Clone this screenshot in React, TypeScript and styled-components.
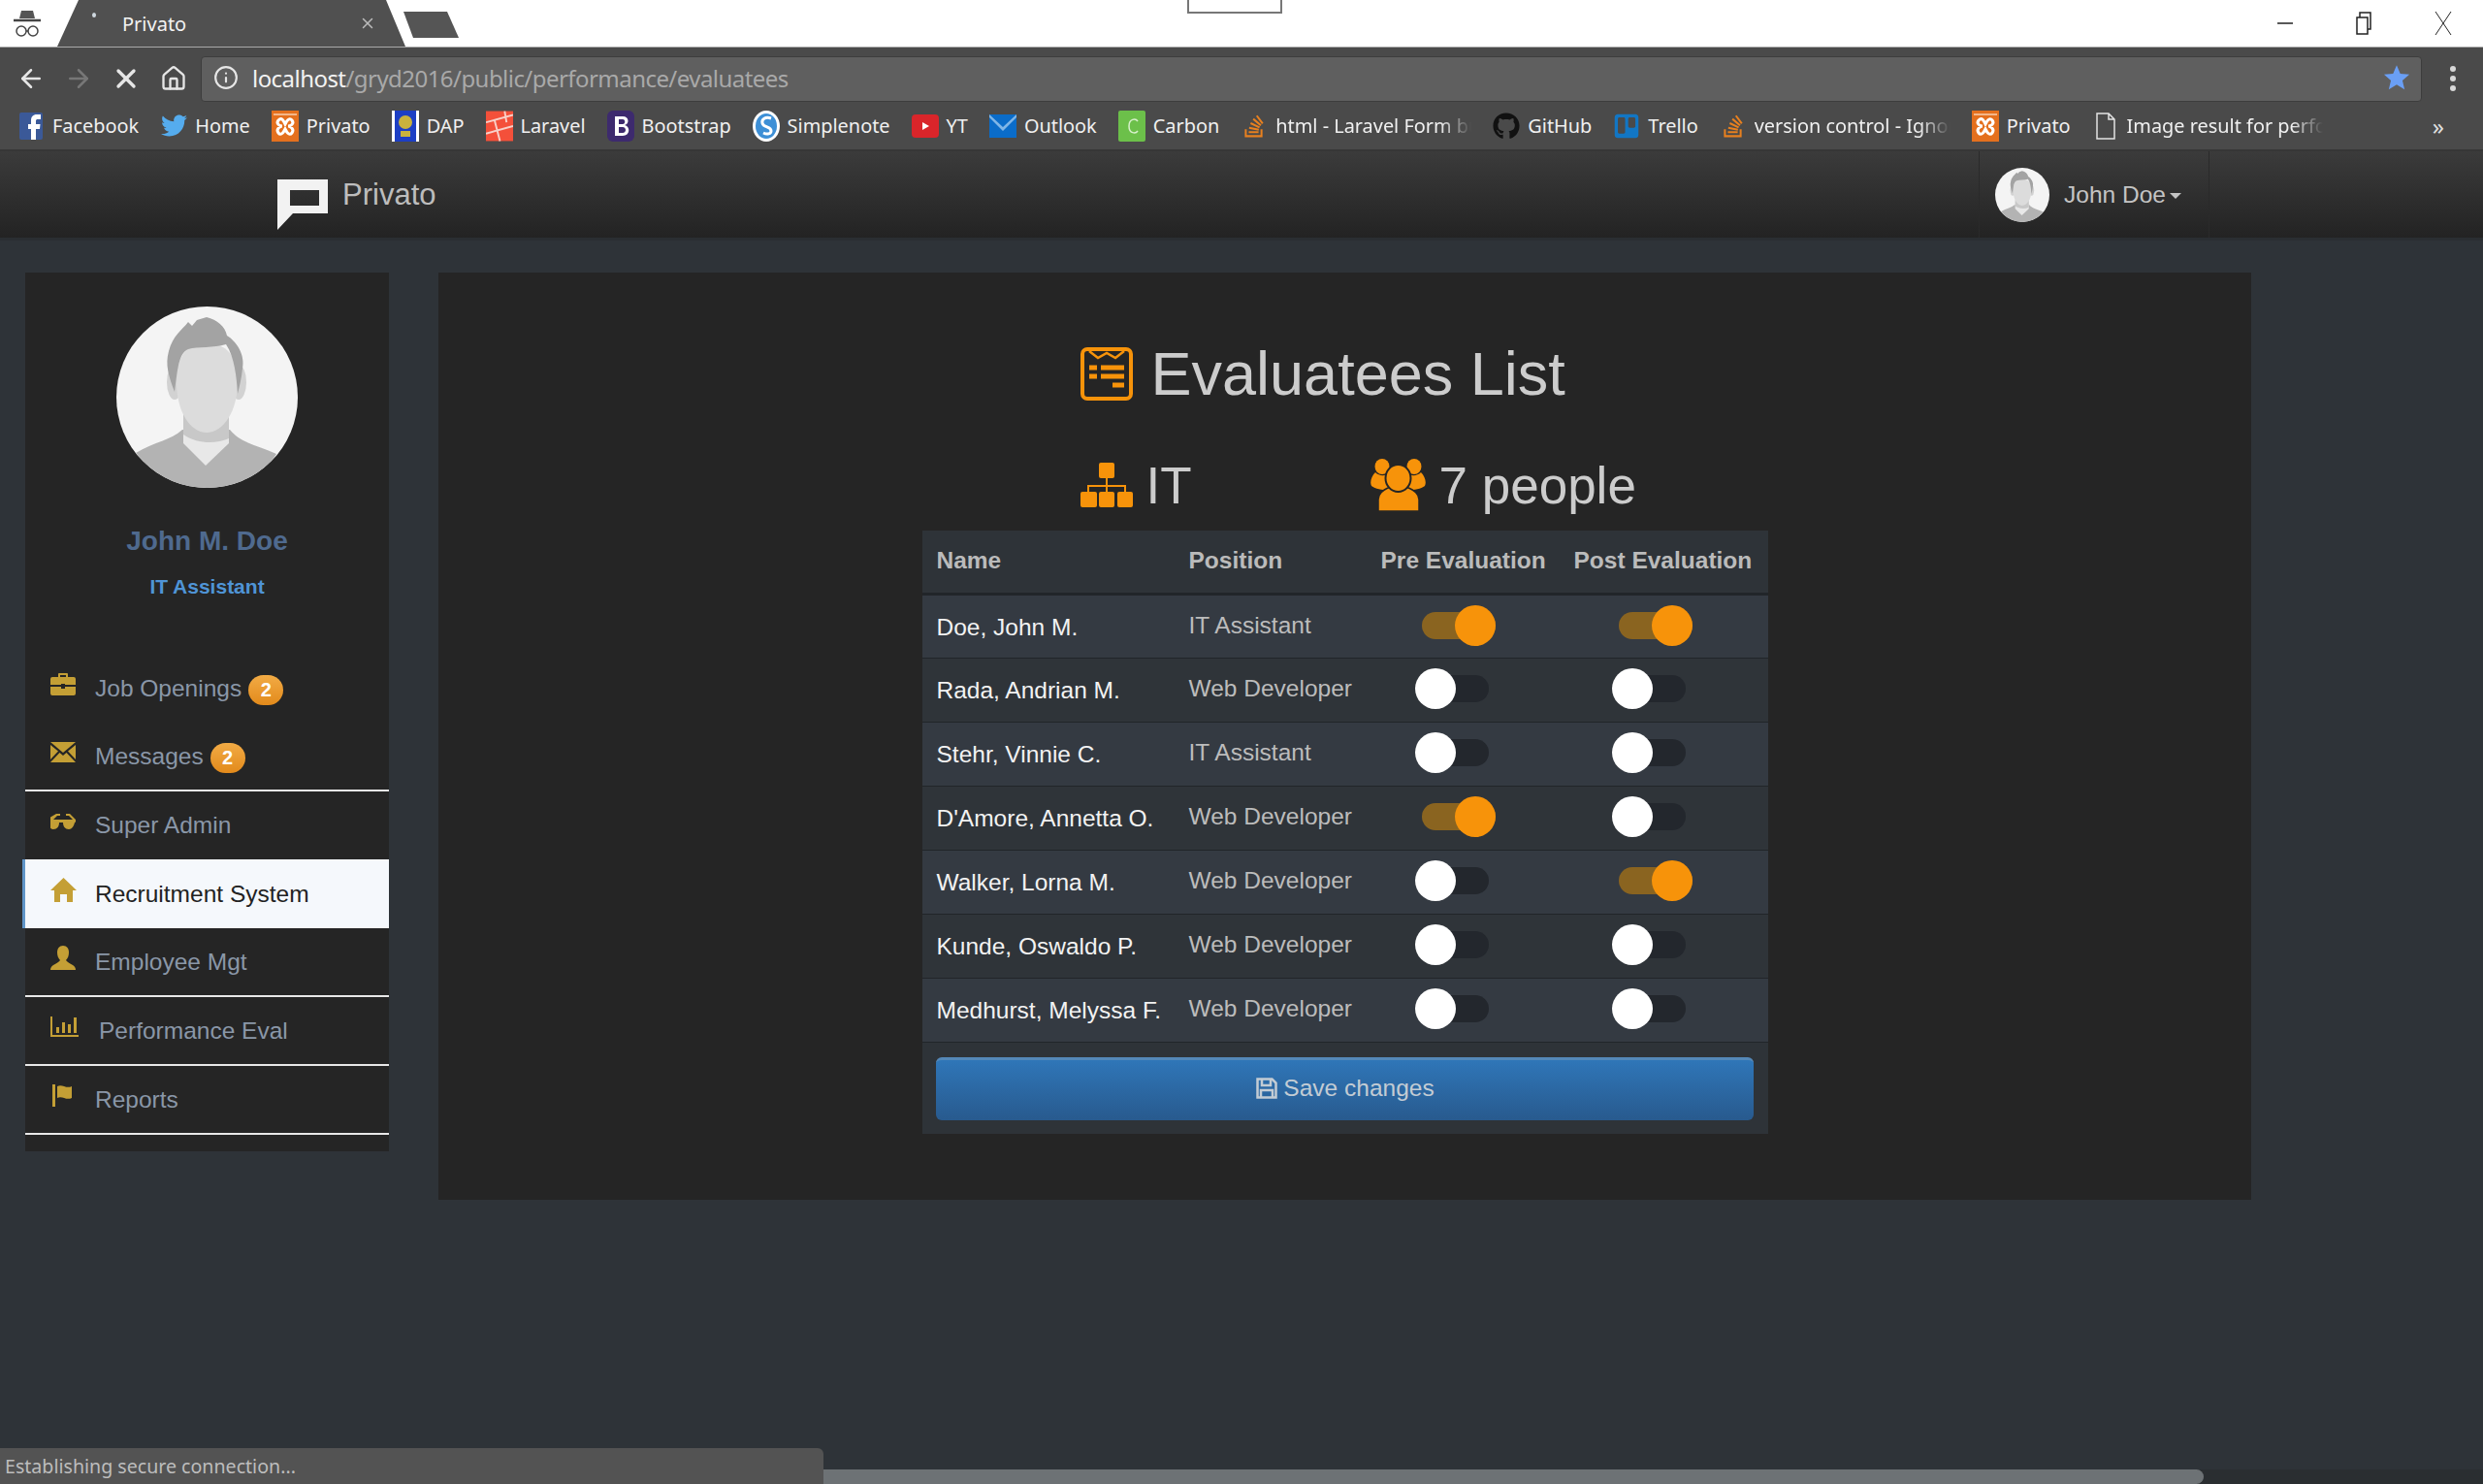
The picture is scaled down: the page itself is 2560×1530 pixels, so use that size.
import { ReactNode } from "react";
import styled, { createGlobalStyle } from "styled-components";
import { ArrowLeft, ArrowRight, Home, Info, X } from "lucide-react";
import { FaGithub, FaStackOverflow, FaTrello, FaTwitter } from "react-icons/fa";

const ORANGE = "#f7930a";
const GOLD = "#c49f35";

const GlobalStyle = createGlobalStyle`
  html, body {
    margin: 0;
    padding: 0;
    background: #2e3338;
  }
  * {
    box-sizing: border-box;
  }
`;

const Page = styled.div`
  position: relative;
  display: flex;
  flex-direction: column;
  width: 2560px;
  height: 1530px;
  overflow: hidden;
  background: #2e3338;
  font-family: "Liberation Sans", Arial, sans-serif;
`;

/* browser chrome */
const TabStrip = styled.div`
  position: relative;
  display: flex;
  align-items: flex-end;
  height: 49px;
  background: #fff;
  border-bottom: 1px solid #a9a9a9;
  font-family: "Noto Sans", sans-serif;
`;

const Incognito = styled.div`
  display: flex;
  justify-content: center;
  align-items: center;
  width: 59px;
  height: 48px;
  padding-right: 4px;
`;

const Tab = styled.div`
  position: relative;
  display: flex;
  align-items: center;
  width: 359px;
  height: 48px;
  padding: 0 30px 0 67px;
  background: #505050;
  clip-path: polygon(22px 0, 339px 0, 359px 100%, 0 100%);
  color: #f2f2f2;
  font-size: 20px;
`;

const TabSpinner = styled.span`
  position: absolute;
  top: 13px;
  left: 36px;
  width: 4px;
  height: 5px;
  border-radius: 50%;
  background: #cfd8e0;
`;

const TabTitle = styled.span`
  flex: 1;
`;

const NewTab = styled.div`
  width: 57px;
  height: 27px;
  margin: 0 0 9px -2px;
  background: #555;
  clip-path: polygon(0 0, 45px 0, 100% 100%, 10px 100%);
`;

const Marker = styled.div`
  position: absolute;
  top: -2px;
  left: 1224px;
  width: 98px;
  height: 16px;
  border: 2px solid #777;
`;

const WindowButtons = styled.div`
  display: flex;
  align-items: center;
  margin-left: auto;
  height: 48px;
  padding-right: 32px;
  gap: 65px;
`;

const Toolbar = styled.div`
  display: flex;
  align-items: center;
  height: 56px;
  padding: 8px 14px 0 7px;
  background: #4a4a4a;
`;

const NavIcon = styled.div<{ $dim?: boolean }>`
  display: flex;
  justify-content: center;
  width: 50px;
  margin-right: -1px;
  color: ${(p) => (p.$dim ? "#777" : "#e6e6e6")};
`;

const Omnibox = styled.div`
  display: flex;
  align-items: center;
  flex: 1;
  height: 47px;
  margin-left: 4px;
  padding: 0 11px 2px 12px;
  background: #5f5f5f;
  border: 1px solid #3d3d3d;
  border-radius: 4px;
  color: #a9a9a9;
  font-family: "Noto Sans", sans-serif;
  font-size: 24px;
  letter-spacing: -0.55px;
`;

const Host = styled.span`
  margin-left: 14px;
  color: #f2f2f2;
`;

const Star = styled.svg`
  margin-left: auto;
`;

const MenuDots = styled.div`
  display: flex;
  flex-direction: column;
  align-items: center;
  gap: 4px;
  width: 40px;
  margin-left: 12px;
  margin-right: -3px;
`;

const MenuDot = styled.span`
  width: 6px;
  height: 6px;
  border-radius: 50%;
  background: #d8d8d8;
`;

const BookmarkBar = styled.div`
  display: flex;
  align-items: center;
  gap: 22px;
  height: 51px;
  padding: 0 0 0 18px;
  background: #4a4a4a;
  border-bottom: 2px solid #363636;
  color: #f0f0f0;
  font-family: "Noto Sans", sans-serif;
  font-size: 19.9px;
`;

const Bookmark = styled.div`
  display: flex;
  align-items: center;
  gap: 8px;
`;

const Favicon = styled.div`
  display: flex;
  justify-content: center;
  align-items: center;
  flex: none;
  width: 28px;
  height: 28px;
`;

const BookmarkLabel = styled.span<{ $cut?: boolean }>`
  white-space: nowrap;
  ${(p) =>
    p.$cut &&
    `
    width: 202px;
    overflow: hidden;
    -webkit-mask-image: linear-gradient(to right, #000 84%, transparent 100%);
    mask-image: linear-gradient(to right, #000 84%, transparent 100%);
  `}
`;

const More = styled.span`
  margin-left: auto;
  padding-right: 40px;
  color: #ddd;
  font-size: 24px;
`;

/* app navbar */
const NavBar = styled.div`
  display: flex;
  align-items: stretch;
  height: 92px;
  padding-left: 286px;
  padding-right: 282px;
  background: linear-gradient(to bottom, #3b3b3b, #232323);
  border-bottom: 3px solid #2a2e32;
`;

const Brand = styled.div`
  display: flex;
  align-items: center;
  gap: 15px;
  margin-right: auto;
  color: #bdbdbd;
  font-size: 31px;
`;

const BrandLogo = styled.svg`
  margin-top: 20px;
`;

const UserMenu = styled.div`
  display: flex;
  align-items: center;
  width: 238px;
  padding-left: 16px;
  gap: 15px;
  border-left: 1px solid #2a2a2a;
  border-right: 1px solid #2a2a2a;
  color: #c4c4c4;
  font-size: 24.5px;
`;

const Caret = styled.span`
  width: 0;
  height: 0;
  margin: 3px 0 0 -11px;
  border-left: 6px solid transparent;
  border-right: 6px solid transparent;
  border-top: 6px solid #c4c4c4;
`;

const RoundPhoto = styled.svg<{ $size: number }>`
  display: block;
  flex: none;
  width: ${(p) => p.$size}px;
  height: ${(p) => p.$size}px;
  border-radius: 50%;
`;

/* page body */
const Body = styled.div`
  display: flex;
  align-items: flex-start;
  flex: 1;
  gap: 51px;
  padding: 33px 0 0 26px;
`;

const Sidebar = styled.div`
  width: 375px;
  height: 906px;
  padding-top: 35px;
  background: #252525;
`;

const Profile = styled.div`
  display: flex;
  flex-direction: column;
  align-items: center;
  height: 358px;
`;

const ProfileName = styled.div`
  margin-top: 39px;
  color: #4f6a8f;
  font-size: 28px;
  font-weight: 700;
`;

const ProfileRole = styled.div`
  margin-top: 19px;
  color: #4f94d6;
  font-size: 21px;
  font-weight: 700;
`;

const NavList = styled.div`
  display: flex;
  flex-direction: column;
`;

const NavItem = styled.div<{ $active?: boolean; $line?: boolean }>`
  position: relative;
  display: flex;
  align-items: center;
  height: ${(p) => (p.$line ? 71 : 70.5)}px;
  padding: 1px 0 0 26px;
  background: ${(p) => (p.$active ? "#f5f8fc" : "transparent")};
  border-bottom: ${(p) => (p.$line ? "2px solid #e8e8e8" : "none")};
  color: ${(p) => (p.$active ? "#222" : "#8a97a8")};
  font-size: 24.5px;
  ${(p) => p.$active && `box-shadow: -3px 0 0 #5f95c8;`}
`;

const NavIconBox = styled.div<{ $wide?: boolean }>`
  display: flex;
  flex: none;
  width: ${(p) => (p.$wide ? 50 : 46)}px;
  margin-bottom: 8px;
  color: ${GOLD};
`;

const Badge = styled.span`
  display: flex;
  justify-content: center;
  align-items: center;
  width: 36px;
  height: 31px;
  margin-left: 7px;
  margin-top: 3px;
  border-radius: 16px;
  background: linear-gradient(to bottom, #f2ab45, #e28a1b);
  color: #fff;
  font-size: 20px;
  font-weight: 700;
`;

const Main = styled.div`
  display: flex;
  flex-direction: column;
  align-items: center;
  width: 1869px;
  height: 956px;
  padding-top: 66px;
  background: #252525;
`;

const Content = styled.div`
  width: 872px;
`;

const Title = styled.div`
  display: flex;
  align-items: center;
  gap: 19px;
  height: 76px;
  padding-left: 163px;
  color: #cccccc;
  font-size: 63px;
`;

const Stats = styled.div`
  display: flex;
  align-items: center;
  height: 72px;
  margin: 41px 0 11px;
  padding-left: 163px;
  color: #cccccc;
  font-size: 53px;
`;

const Stat = styled.div<{ $width?: number }>`
  display: flex;
  align-items: center;
  gap: 14px;
  width: ${(p) => (p.$width ? `${p.$width}px` : "auto")};
`;

const TablePanel = styled.div`
  background: #2e3338;
`;

const Table = styled.table`
  width: 872px;
  border-collapse: collapse;
  table-layout: fixed;
  font-size: 24.5px;
`;

const HeadCell = styled.th<{ $width: number; $first?: boolean }>`
  width: ${(p) => p.$width}px;
  height: 65px;
  padding: 0 0 1px ${(p) => (p.$first ? 15 : 14)}px;
  border-bottom: 3px solid #212529;
  color: #bbbbbb;
  font-weight: 700;
  text-align: left;
  white-space: nowrap;
`;

const Row = styled.tr<{ $odd: boolean }>`
  height: 66px;
  background: ${(p) => (p.$odd ? "#343a42" : "#2f3439")};
  border-bottom: 1px solid #212529;
`;

const NameCell = styled.td`
  padding: 2px 0 0 15px;
  color: #f2f2f2;
  white-space: nowrap;
`;

const PositionCell = styled.td`
  padding: 0 0 2px 14px;
  color: #bcbcbc;
  white-space: nowrap;
`;

const ToggleCell = styled.td<{ $pad: number }>`
  padding: 0 0 2px ${(p) => p.$pad}px;
`;

const Toggle = styled.div`
  position: relative;
  width: 76px;
  height: 42px;
`;

const Track = styled.span<{ $on: boolean }>`
  position: absolute;
  top: 7px;
  bottom: 7px;
  left: ${(p) => (p.$on ? 7 : 0)}px;
  width: 76px;
  border-radius: 14px;
  background: ${(p) => (p.$on ? "#8a6420" : "#23272d")};
`;

const Knob = styled.span<{ $on: boolean }>`
  position: absolute;
  top: 0;
  left: ${(p) => (p.$on ? 41 : 0)}px;
  width: 42px;
  height: 42px;
  border-radius: 50%;
  background: ${(p) => (p.$on ? ORANGE : "#fff")};
`;

const Actions = styled.div`
  padding: 15px 15px 14px 14px;
`;

const SaveButton = styled.button`
  display: flex;
  justify-content: center;
  align-items: center;
  gap: 6px;
  width: 100%;
  height: 65px;
  padding: 0 0 4px 2px;
  border: none;
  border-top: 3px solid #5488b8;
  border-radius: 6px;
  background: linear-gradient(to bottom, #2f76b8, #285a8e);
  color: #c3ccd4;
  font-family: inherit;
  font-size: 24.5px;
`;

/* bottom of the window */
const Scrollbar = styled.div`
  flex: none;
  height: 15px;
  padding-right: 288px;
  background: #2a2e31;
`;

const ScrollThumb = styled.div`
  height: 15px;
  border-radius: 0 8px 8px 0;
  background: #6d7275;
`;

const StatusBubble = styled.div`
  position: absolute;
  left: 0;
  bottom: 0;
  display: flex;
  align-items: center;
  width: 849px;
  height: 37px;
  padding-left: 5px;
  border-radius: 0 6px 0 0;
  background: #535353;
  color: #bdbdbd;
  font-family: "Noto Sans", sans-serif;
  font-size: 19.6px;
`;

function Person({ size }: { size: number }) {
  return (
    <RoundPhoto $size={size} viewBox="0 0 187 187">
      <rect width="187" height="187" fill="#f4f4f4" />
      <path d="M20 151 C40 139 56 138 68 127 L117 127 C128 141 146 143 165 152 C150 175 120 187 93 187 C62 187 38 173 20 151Z" fill="#b3b3b3" />
      <path d="M69 111 L116 111 L116 141 L92 164 L69 141Z" fill="#e8e8e8" />
      <path d="M69 111 L116 111 L116 136 C102 142 84 142 69 132Z" fill="#c8c8c8" />
      <ellipse cx="60" cy="78" rx="8" ry="18" fill="#d2d2d2" />
      <ellipse cx="126" cy="78" rx="8" ry="18" fill="#d2d2d2" />
      <path d="M93 38 C113 38 125 50 125 78 C125 108 110 130 93 130 C76 130 62 108 62 78 C62 50 73 38 93 38Z" fill="#dcdcdc" />
      <path d="M60 88 C54 72 50 60 54 46 C58 30 68 24 74 16 L78 20 L83 14 L93 11 C104 14 112 20 114 30 C124 36 133 50 130 64 C129 74 127 82 125 90 C124 74 122 52 113 39 C100 43 84 41 74 44 C64 48 63 66 60 88Z" fill="#a3a3a3" />
    </RoundPhoto>
  );
}

function Xampp() {
  return (
    <svg width="28" height="32" viewBox="0 0 28 32">
      <rect width="28" height="32" fill="#e4701e" />
      <rect x="2" y="3" width="24" height="2" fill="#f3b78a" />
      <path d="M7 10 C11 6 13 12 14 14 C15 12 18 6 21 10 C24 14 19 16 17 16 C19 16 24 19 21 23 C18 27 15 21 14 19 C13 21 10 27 7 23 C4 19 9 16 11 16 C9 16 4 14 7 10Z" fill="none" stroke="#fff" strokeWidth="3" />
    </svg>
  );
}

function Briefcase() {
  return (
    <svg width="26" height="23" viewBox="0 0 26 23" fill="currentColor">
      <path d="M9 0h8a1 1 0 0 1 1 1v3h6a2 2 0 0 1 2 2v6H15v-1h-4v1H0V6a2 2 0 0 1 2-2h6V1a1 1 0 0 1 1-1zm1 2v2h6V2z" />
      <path d="M0 14h11v2h4v-2h11v7a2 2 0 0 1-2 2H2a2 2 0 0 1-2-2z" />
    </svg>
  );
}

function Envelope() {
  return (
    <svg width="26" height="21" viewBox="0 0 26 21" fill="currentColor">
      <path d="M0 0h26L13 11z" />
      <path d="M0 3v15l8-8.500zM26 3v15l-8-8.500zM9.500 11 13 14l3.500-3L26 21H0z" />
    </svg>
  );
}

function Sunglasses() {
  return (
    <svg width="26" height="16" viewBox="0 0 26 16" fill="currentColor">
      <path d="M6 0h4v2H7L3 6h20l-4-4h-3V0h4l6 6v2a1 1 0 0 1-1 1c-1 4-3 7-6 7-4 0-6-3-6-7h-4c0 4-2 7-6 7-3 0-5-3-6-7a1 1 0 0 1-1-1V6z" />
    </svg>
  );
}

function HomeGlyph() {
  return (
    <svg width="27" height="25" viewBox="0 0 27 25" fill="currentColor">
      <path d="M13.500 0 27 13h-4v12h-6v-8h-7v8H4V13H0z" />
    </svg>
  );
}

function UserGlyph() {
  return (
    <svg width="26" height="25" viewBox="0 0 26 25" fill="currentColor">
      <path d="M13 0c4 0 6 3 6 7 0 3-1 6-3 8 1 2 4 3 7 5 2 1 3 3 3 5H0c0-2 1-4 3-5 3-2 6-3 7-5-2-2-3-5-3-8 0-4 2-7 6-7z" />
    </svg>
  );
}

function StatsGlyph() {
  return (
    <svg width="29" height="21" viewBox="0 0 29 21" fill="currentColor">
      <path d="M0 0h2v19h27v2H0z" />
      <path d="M6 11h3v6H6zM12 6h3v11h-3zM18 8h3v9h-3zM24 1h3v16h-3z" />
    </svg>
  );
}

function FlagGlyph() {
  return (
    <svg width="24" height="23" viewBox="0 0 24 23" fill="currentColor">
      <path d="M2 0h3v23H2z" />
      <path d="M7 2c5-3 9 3 15 0v12c-6 3-10-3-15 0z" />
    </svg>
  );
}

function ListGlyph() {
  return (
    <svg width="54" height="55" viewBox="0 0 54 55" fill="none" stroke={ORANGE}>
      <rect x="2" y="2" width="50" height="51" rx="5" strokeWidth="4" />
      <path d="M9 4 18 11 27 6 36 11 45 4" strokeWidth="2.500" />
      <path d="M9 21h8M21 21h24M9 30h8M21 30h24M33 39h12" strokeWidth="5" />
    </svg>
  );
}

function Sitemap() {
  return (
    <svg width="54" height="46" viewBox="0 0 54 46" fill={ORANGE}>
      <rect x="19" y="0" width="16" height="16" rx="2" />
      <rect x="0" y="30" width="17" height="16" rx="2" />
      <rect x="19" y="30" width="16" height="16" rx="2" />
      <rect x="38" y="30" width="16" height="16" rx="2" />
      <path d="M26 16h2v7h19v7h-2v-5H28v5h-2v-5H9v5H7v-7h19z" />
    </svg>
  );
}

function People() {
  return (
    <svg width="57" height="54" viewBox="0 0 57 54" fill={ORANGE}>
      <ellipse cx="12" cy="8" rx="7.500" ry="8" />
      <ellipse cx="45" cy="8" rx="7.500" ry="8" />
      <path d="M5 14c4 4 10 4 14 1l4 17c-6 1-17 0-22-4-2-4 0-10 4-14z" />
      <path d="M52 14c-4 4-10 4-14 1l-4 17c6 1 17 0 22-4 2-4 0-10-4-14z" />
      <path d="M8 54V42c0-8 10-14 20.500-14S50 34 50 42v12z" stroke="#252525" strokeWidth="1.500" />
      <ellipse cx="28.500" cy="20" rx="13" ry="14" stroke="#252525" strokeWidth="2" />
    </svg>
  );
}

function SaveGlyph() {
  return (
    <svg width="22" height="22" viewBox="0 0 22 22" fill="none" stroke="#c3ccd4" strokeWidth="2.500">
      <path d="M1.500 1.500h15l4 4v15h-19z" />
      <path d="M6 2v6h9V2M5 21v-8h12v8" />
    </svg>
  );
}

const bookmarks: { label: string; icon: ReactNode; cut?: boolean }[] = [
  {
    label: "Facebook",
    icon: (
      <svg width="24" height="28" viewBox="0 0 24 28">
        <rect width="24" height="28" rx="2" fill="#3b5998" />
        <path d="M17 28V17h4l.500-5H17V9c0-1.500.500-2 2-2h3V2h-4c-4 0-6 2.500-6 6v4H9v5h3v11z" fill="#fff" />
      </svg>
    ),
  },
  { label: "Home", icon: <FaTwitter size={27} color="#55acee" /> },
  { label: "Privato", icon: <Xampp /> },
  {
    label: "DAP",
    icon: (
      <svg width="28" height="32" viewBox="0 0 28 32">
        <rect width="28" height="32" fill="#fff" />
        <rect x="3" width="22" height="32" fill="#1d3fc4" />
        <circle cx="14" cy="12" r="7" fill="#c9b23c" />
        <rect x="9" y="21" width="10" height="6" fill="#c9b23c" />
      </svg>
    ),
  },
  {
    label: "Laravel",
    icon: (
      <svg width="29" height="32" viewBox="0 0 29 32">
        <rect width="29" height="32" fill="#f4503a" />
        <path d="M0 12 29 4M0 24l29-8M9 9l6 23M20 0l2 12" stroke="#f8d0c8" strokeWidth="2" />
      </svg>
    ),
  },
  {
    label: "Bootstrap",
    icon: (
      <svg width="28" height="32" viewBox="0 0 28 32">
        <rect width="28" height="32" rx="6" fill="#3d2a6e" />
        <path d="M8 6h8c7 0 7 8 2 9 6 1 6 11-2 11H8zM12 9v5h4c3 0 3-5 0-5zM12 17v6h4c4 0 4-6 0-6z" fill="#fff" fillRule="evenodd" />
      </svg>
    ),
  },
  {
    label: "Simplenote",
    icon: (
      <svg width="28" height="32" viewBox="0 0 28 32">
        <ellipse cx="14" cy="16" rx="14" ry="16" fill="#fff" />
        <ellipse cx="14" cy="16" rx="11" ry="13" fill="#3d8fd6" />
        <path d="M19 8c-6-2-10 1-9 5 1 5 9 3 9 8 0 3-4 4-8 2" fill="none" stroke="#fff" strokeWidth="3" />
      </svg>
    ),
  },
  {
    label: "YT",
    icon: (
      <svg width="28" height="24" viewBox="0 0 28 24">
        <rect width="28" height="24" rx="4" fill="#d9252a" />
        <path d="M11 8l7 4-7 4z" fill="#fff" />
      </svg>
    ),
  },
  {
    label: "Outlook",
    icon: (
      <svg width="28" height="24" viewBox="0 0 28 24">
        <rect width="28" height="24" fill="#0a6cc9" />
        <path d="M0 0l14 13L28 0v3L14 17 0 3z" fill="#7fb6e8" />
      </svg>
    ),
  },
  {
    label: "Carbon",
    icon: (
      <svg width="28" height="32" viewBox="0 0 28 32">
        <rect width="28" height="32" rx="2" fill="#6cc04a" />
        <path d="M20 11c-2-3-9-3-9 5s7 8 9 5" fill="none" stroke="#d8f0cc" strokeWidth="1.500" />
      </svg>
    ),
  },
  { label: "html - Laravel Form bu", icon: <FaStackOverflow size={26} color="#e8801f" />, cut: true },
  { label: "GitHub", icon: <FaGithub size={28} color="#111" /> },
  { label: "Trello", icon: <FaTrello size={28} color="#1276c4" /> },
  { label: "version control - Ignore", icon: <FaStackOverflow size={26} color="#e8801f" />, cut: true },
  { label: "Privato", icon: <Xampp /> },
  {
    label: "Image result for performance",
    icon: (
      <svg width="20" height="28" viewBox="0 0 20 28" fill="none" stroke="#e4e4e4" strokeWidth="1.500">
        <path d="M1 1h12l6 6v20H1zM13 1v6h6" />
      </svg>
    ),
    cut: true,
  },
];

const navItems: { label: string; icon: ReactNode; badge?: number; active?: boolean; line?: boolean; wide?: boolean }[] = [
  { label: "Job Openings", icon: <Briefcase />, badge: 2 },
  { label: "Messages", icon: <Envelope />, badge: 2, line: true },
  { label: "Super Admin", icon: <Sunglasses /> },
  { label: "Recruitment System", icon: <HomeGlyph />, active: true },
  { label: "Employee Mgt", icon: <UserGlyph />, line: true },
  { label: "Performance Eval", icon: <StatsGlyph />, line: true, wide: true },
  { label: "Reports", icon: <FlagGlyph />, line: true },
];

const evaluatees = [
  { name: "Doe, John M.", position: "IT Assistant", pre: true, post: true },
  { name: "Rada, Andrian M.", position: "Web Developer", pre: false, post: false },
  { name: "Stehr, Vinnie C.", position: "IT Assistant", pre: false, post: false },
  { name: "D'Amore, Annetta O.", position: "Web Developer", pre: true, post: false },
  { name: "Walker, Lorna M.", position: "Web Developer", pre: false, post: true },
  { name: "Kunde, Oswaldo P.", position: "Web Developer", pre: false, post: false },
  { name: "Medhurst, Melyssa F.", position: "Web Developer", pre: false, post: false },
];

function Switch({ on }: { on: boolean }) {
  return (
    <Toggle>
      <Track $on={on} />
      <Knob $on={on} />
    </Toggle>
  );
}

export default function App() {
  return (
    <Page>
      <GlobalStyle />
      <TabStrip>
        <Incognito>
          <svg width="28" height="30" viewBox="0 0 28 30" fill="none" stroke="#444" strokeWidth="1.500">
            <path d="M8 2h12l2 8H6z" fill="#555" stroke="none" />
            <path d="M0 12h28" strokeWidth="2.500" />
            <circle cx="8" cy="23" r="5" />
            <circle cx="20" cy="23" r="5" />
            <path d="M13 23h2" />
          </svg>
        </Incognito>
        <Tab>
          <TabSpinner />
          <TabTitle>Privato</TabTitle>
          <X size={18} color="#bbb" />
        </Tab>
        <NewTab />
        <Marker />
        <WindowButtons>
          <svg width="16" height="16" viewBox="0 0 16 16" stroke="#222">
            <path d="M0 8h16" strokeWidth="1.500" />
          </svg>
          <svg width="16" height="24" viewBox="0 0 16 24" fill="none" stroke="#222" strokeWidth="1.500">
            <path d="M1 6h11v17H1zM4 6V1h11v17h-3" />
          </svg>
          <svg width="18" height="26" viewBox="0 0 18 26" stroke="#222" strokeWidth="1">
            <path d="M1 1l16 24M17 1L1 25" />
          </svg>
        </WindowButtons>
      </TabStrip>
      <Toolbar>
        <NavIcon>
          <ArrowLeft size={30} strokeWidth={2} />
        </NavIcon>
        <NavIcon $dim>
          <ArrowRight size={30} strokeWidth={2} />
        </NavIcon>
        <NavIcon>
          <X size={32} strokeWidth={2.500} />
        </NavIcon>
        <NavIcon>
          <Home size={28} strokeWidth={2} />
        </NavIcon>
        <Omnibox>
          <Info size={26} color="#e6e6e6" />
          <Host>localhost</Host>
          /gryd2016/public/performance/evaluatees
          <Star width="28" height="28" viewBox="0 0 24 24" fill="#6a9ff5">
            <path d="M12 1l3.200 7.600 8 .700-6.100 5.300 1.900 8L12 18.300 5 22.600l1.900-8L.800 9.300l8-.700z" />
          </Star>
        </Omnibox>
        <MenuDots>
          <MenuDot />
          <MenuDot />
          <MenuDot />
        </MenuDots>
      </Toolbar>
      <BookmarkBar>
        {bookmarks.map((b, i) => (
          <Bookmark key={i}>
            <Favicon>{b.icon}</Favicon>
            <BookmarkLabel $cut={b.cut}>{b.label}</BookmarkLabel>
          </Bookmark>
        ))}
        <More>»</More>
      </BookmarkBar>

      <NavBar>
        <Brand>
          <BrandLogo width="52" height="52" viewBox="0 0 52 52" fill="#f2f2f2">
            <path fillRule="evenodd" d="M0 0h52v35H16L0 52zM13 11v16h30V11z" />
          </BrandLogo>
          Privato
        </Brand>
        <UserMenu>
          <Person size={56} />
          John Doe
          <Caret />
        </UserMenu>
      </NavBar>

      <Body>
        <Sidebar>
          <Profile>
            <Person size={187} />
            <ProfileName>John M. Doe</ProfileName>
            <ProfileRole>IT Assistant</ProfileRole>
          </Profile>
          <NavList>
            {navItems.map((item) => (
              <NavItem key={item.label} $active={item.active} $line={item.line}>
                <NavIconBox $wide={item.wide}>{item.icon}</NavIconBox>
                {item.label}
                {item.badge ? <Badge>{item.badge}</Badge> : null}
              </NavItem>
            ))}
          </NavList>
        </Sidebar>

        <Main>
          <Content>
            <Title>
              <ListGlyph />
              Evaluatees List
            </Title>
            <Stats>
              <Stat $width={299}>
                <Sitemap />
                IT
              </Stat>
              <Stat>
                <People />7 people
              </Stat>
            </Stats>
            <TablePanel>
              <Table>
                <thead>
                  <tr>
                    <HeadCell $width={261} $first>Name</HeadCell>
                    <HeadCell $width={198}>Position</HeadCell>
                    <HeadCell $width={199}>Pre Evaluation</HeadCell>
                    <HeadCell $width={214}>Post Evaluation</HeadCell>
                  </tr>
                </thead>
                <tbody>
                  {evaluatees.map((e, i) => (
                    <Row key={e.name} $odd={i % 2 === 0}>
                      <NameCell>{e.name}</NameCell>
                      <PositionCell>{e.position}</PositionCell>
                      <ToggleCell $pad={49}>
                        <Switch on={e.pre} />
                      </ToggleCell>
                      <ToggleCell $pad={53}>
                        <Switch on={e.post} />
                      </ToggleCell>
                    </Row>
                  ))}
                </tbody>
              </Table>
              <Actions>
                <SaveButton>
                  <SaveGlyph />
                  Save changes
                </SaveButton>
              </Actions>
            </TablePanel>
          </Content>
        </Main>
      </Body>

      <Scrollbar>
        <ScrollThumb />
      </Scrollbar>
      <StatusBubble>Establishing secure connection...</StatusBubble>
    </Page>
  );
}
